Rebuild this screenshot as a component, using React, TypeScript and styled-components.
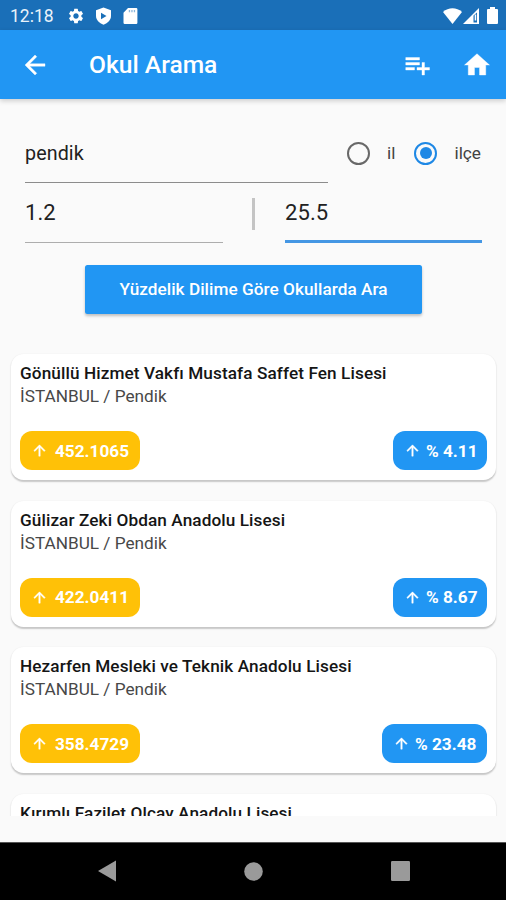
import React from "react";
import styled, { createGlobalStyle } from "styled-components";
import { MdArrowBack, MdArrowUpward, MdHome, MdPlaylistAdd, MdSettings } from "react-icons/md";

const Global = createGlobalStyle`
  * { box-sizing: border-box; }
  body { margin: 0; background: #fafafa; font-family: Roboto, "Noto Sans", sans-serif; }
`;

const Screen = styled.div`
  width: 506px;
  height: 900px;
  display: flex;
  flex-direction: column;
  overflow: hidden;
  background: #fafafa;
`;

const StatusBar = styled.div`
  height: 30px;
  flex: none;
  display: flex;
  justify-content: space-between;
  padding: 1px 8px 0 10px;
  background: #1a6fb8;
  color: #fff;
`;

const StatusGroup = styled.div`
  display: flex;
  align-items: center;
  svg { display: block; }
`;

const Clock = styled.span`
  width: 57px;
  font-size: 17.5px;
  line-height: 29px;
  padding-top: 1px;
  color: #e9f2fa;
`;

const StatusIcon = styled.span<{ $w: number }>`
  width: ${(p) => p.$w}px;
  display: flex;
`;

const AppBar = styled.header`
  height: 69px;
  flex: none;
  display: flex;
  align-items: center;
  padding: 0 14px 0 20px;
  background: #2196f3;
  color: #fff;
  box-shadow: 0 2px 5px rgba(0, 0, 0, 0.18);
  svg { display: block; flex: none; }
  path:not([fill="none"]) { stroke: currentColor; stroke-width: 0.3px; }
`;

const Title = styled.h1`
  flex: 1;
  margin: 0 0 0 39px;
  font-size: 24.6px;
  line-height: 30px;
  font-weight: 500;
`;

const Actions = styled.div`
  display: flex;
  gap: 30px;
`;

const Form = styled.form`
  flex: none;
  height: 254px;
  padding: 24px 24px 0 25px;
  display: flex;
  flex-direction: column;
`;

const Row = styled.div<{ $h: number }>`
  display: flex;
  height: ${(p) => p.$h}px;
`;

const Field = styled.div<{ $w: number; $size: number; $line: string; $thick?: number }>`
  width: ${(p) => p.$w}px;
  flex: none;
  height: 60px;
  font-size: ${(p) => p.$size}px;
  line-height: 60px;
  letter-spacing: 0.1px;
  color: #212121;
  border-bottom: ${(p) => p.$thick ?? 1}px solid ${(p) => p.$line};
`;

const SearchField = styled(Field)`
  line-height: 61px;
`;

const Radios = styled.div`
  flex: 1;
  height: 60px;
  display: flex;
  align-items: center;
  padding-left: 18.5px;
  font-size: 17.2px;
  color: #424242;
`;

const RadioDot = styled.span<{ $on?: boolean }>`
  width: 23px;
  height: 23px;
  flex: none;
  display: grid;
  place-items: center;
  border-radius: 50%;
  border: 2.4px solid ${(p) => (p.$on ? "#1e88e5" : "#686868")};
  &::after {
    content: "";
    width: 12px;
    height: 12px;
    border-radius: 50%;
    background: ${(p) => (p.$on ? "#1e88e5" : "transparent")};
  }
`;

const RadioLabel = styled.span<{ $w: number }>`
  width: ${(p) => p.$w}px;
  flex: none;
  margin-left: 17.5px;
`;

const Divider = styled.span`
  width: 3px;
  height: 32px;
  margin: 15px 30px 0 29px;
  background: #c4c4c4;
`;

const SearchButton = styled.button`
  width: 337px;
  height: 49px;
  margin: 22px 0 0 60px;
  padding: 0;
  border: 0;
  border-radius: 2.5px;
  background: #2196f3;
  color: #fff;
  font: 500 17.2px/49px Roboto, "Noto Sans", sans-serif;
  letter-spacing: 0.04px;
  box-shadow: 0 2px 3px rgba(0, 0, 0, 0.24);
`;

const List = styled.main`
  height: 463px;
  flex: none;
  overflow: hidden;
  padding: 1px 10px 0 11px;
`;

const Card = styled.article`
  height: 126px;
  margin-bottom: 20.6px;
  padding: 8px 9px 0 9px;
  border-radius: 12.5px;
  background: #fff;
  box-shadow: 0 1.5px 1.5px rgba(0, 0, 0, 0.2), 0 0 2px rgba(0, 0, 0, 0.04);
`;

const School = styled.h2`
  margin: 0;
  font-size: 17.2px;
  line-height: 23px;
  font-weight: 500;
  letter-spacing: 0.09px;
  color: #151515;
  white-space: nowrap;
`;

const Place = styled.p`
  margin: 0;
  font-size: 17.2px;
  line-height: 23px;
  color: #484848;
`;

const Badges = styled.div`
  display: flex;
  justify-content: space-between;
  margin-top: 23px;
`;

const Badge = styled.span<{ $tone: string; $w: number; $gap: number }>`
  width: ${(p) => p.$w}px;
  height: 39px;
  display: flex;
  align-items: center;
  gap: ${(p) => p.$gap}px;
  padding-left: 11px;
  border-radius: 12px;
  background: ${(p) => p.$tone};
  color: #fff;
  font-size: 17.2px;
  font-weight: 700;
  white-space: nowrap;
  svg { flex: none; }
  path:not([fill="none"]) { stroke: currentColor; stroke-width: 0.6px; }
`;

const NavBar = styled.nav`
  height: 58px;
  margin-top: auto;
  flex: none;
  display: flex;
  justify-content: center;
  align-items: center;
  background: #000;
  border-top: 1px solid #555;
  gap: 128px;
  padding: 0 0 1px 1px;
`;

type SchoolEntry = { name: string; result?: { score: string; pct: string; w: number } };

const schools: SchoolEntry[] = [
  { name: "Gönüllü Hizmet Vakfı Mustafa Saffet Fen Lisesi", result: { score: "452.1065", pct: "4.11", w: 94 } },
  { name: "Gülizar Zeki Obdan Anadolu Lisesi", result: { score: "422.0411", pct: "8.67", w: 94 } },
  { name: "Hezarfen Mesleki ve Teknik Anadolu Lisesi", result: { score: "358.4729", pct: "23.48", w: 105 } },
  { name: "Kırımlı Fazilet Olcay Anadolu Lisesi" },
];

export default function App() {
  return (
    <>
      <Global />
      <Screen>
        <StatusBar>
          <StatusGroup>
            <Clock>12:18</Clock>
            <StatusIcon $w={28}><MdSettings size={18} /></StatusIcon>
            <StatusIcon $w={28}>
              <svg width="17" height="18" viewBox="0 0 17 18">
                <path fill="#fff" d="M8.5 0.5 16 3.3V9c0 4-3.2 7-7.5 8.7C4.2 16 1 13 1 9V3.3Z" />
                <path fill="#1a6fb8" d="M6 5.8v6.4l5.5-3.2Z" />
              </svg>
            </StatusIcon>
            <StatusIcon $w={18}>
              <svg width="15" height="16" viewBox="0 0 15 16">
                <path fill="#fff" d="M5 0h8.2A1.2 1.2 0 0 1 14.4 1.2V14.8A1.2 1.2 0 0 1 13.2 16H1.7A1.2 1.2 0 0 1 .5 14.8V4.8Z" />
                <path fill="#1a6fb8" opacity=".5" d="M5.8 2h1.3v2.3H5.8zM8.3 2h1.3v2.3H8.3zM10.8 2h1.3v2.3h-1.3z" />
              </svg>
            </StatusIcon>
          </StatusGroup>
          <StatusGroup>
            <StatusIcon $w={20}>
              <svg width="19" height="16" viewBox="0 0 19 16">
                <path fill="#fff" d="M0 4C5.5-1 13.5-1 19 4L9.5 16Z" />
              </svg>
            </StatusIcon>
            <StatusIcon $w={24}>
              <svg width="16" height="16" viewBox="0 0 16 16">
                <path fill="#fff" fillRule="evenodd" d="M0 16 16 0V16ZM10.5 7.5V14.5H14V4.5Z" />
                <path fill="#fff" d="M11.7 6.5h1.5v6h-1.5z" />
              </svg>
            </StatusIcon>
            <svg width="11" height="17" viewBox="0 0 11 17">
              <path fill="#fff" d="M3 0h5v2h2a1 1 0 0 1 1 1v13a1 1 0 0 1-1 1H1a1 1 0 0 1-1-1V3a1 1 0 0 1 1-1h2Z" />
            </svg>
          </StatusGroup>
        </StatusBar>
        <AppBar>
          <MdArrowBack size={30} />
          <Title>Okul Arama</Title>
          <Actions>
            <MdPlaylistAdd size={30} />
            <MdHome size={30} />
          </Actions>
        </AppBar>
        <Form>
          <Row $h={60}>
            <SearchField $w={303} $size={19.7} $line="#8c8c8c">pendik</SearchField>
            <Radios>
              <RadioDot />
              <RadioLabel $w={27}>il</RadioLabel>
              <RadioDot $on />
              <RadioLabel $w={30}>ilçe</RadioLabel>
            </Radios>
          </Row>
          <Row $h={60}>
            <Field $w={198} $size={22} $line="#adadad">1.2</Field>
            <Divider />
            <Field $w={197} $size={22} $line="#4597e4" $thick={3}>25.5</Field>
          </Row>
          <SearchButton type="button">Yüzdelik Dilime Göre Okullarda Ara</SearchButton>
        </Form>
        <List>
          {schools.map(({ name, result }) => (
            <Card key={name}>
              <School>{name}</School>
              {result && (
                <>
                  <Place>İSTANBUL / Pendik</Place>
                  <Badges>
                    <Badge $tone="#ffc107" $w={120} $gap={7}>
                      <MdArrowUpward size={17} />
                      {result.score}
                    </Badge>
                    <Badge $tone="#2196f3" $w={result.w} $gap={5}>
                      <MdArrowUpward size={17} />% {result.pct}
                    </Badge>
                  </Badges>
                </>
              )}
            </Card>
          ))}
        </List>
        <NavBar>
          <svg width="18" height="22" viewBox="0 0 18 22"><path fill="#9a9a9a" d="M18 0.5V21.5L0 11Z" /></svg>
          <svg width="19" height="19" viewBox="0 0 19 19"><circle cx="9.5" cy="9.5" r="9.3" fill="#9a9a9a" /></svg>
          <svg width="19" height="20" viewBox="0 0 19 20"><rect width="19" height="20" rx="1.2" fill="#9a9a9a" /></svg>
        </NavBar>
      </Screen>
    </>
  );
}
